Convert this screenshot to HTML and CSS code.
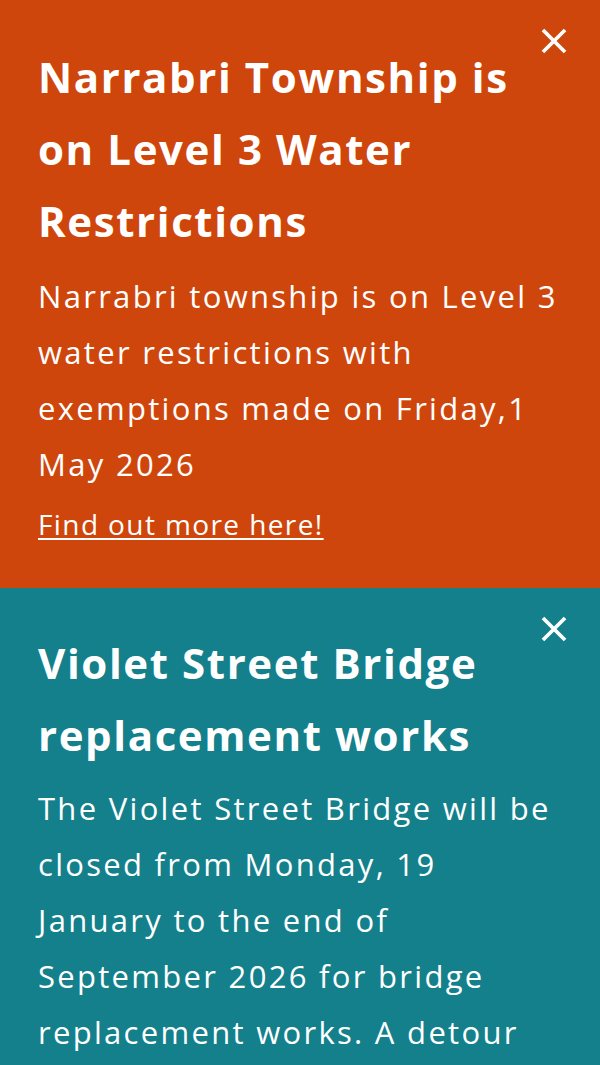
FILE: index.html
```html
<!DOCTYPE html>
<html lang="en">
<head>
    <meta charset="UTF-8">
    <meta name="viewport" content="width=device-width, initial-scale=1.0">
    <title>Alerts</title>
    <link rel="stylesheet" href="styles.css">
</head>
<body>

    <!-- Water restrictions alert -->
    <section class="alert alert-orange">
        <button class="alert-close" aria-label="Close alert">
            <svg viewBox="0 0 24 24" width="26" height="26"><path d="M3 3 L21 21 M21 3 L3 21" /></svg>
        </button>
        <h2>Narrabri Township is on Level 3 Water Restrictions</h2>
        <p>Narrabri township is on Level 3 water restrictions with exemptions made on Friday,1 May 2026</p>
        <p class="alert-more"><a href="#">Find out more here!</a></p>
    </section>

    <!-- Bridge works alert -->
    <section class="alert alert-teal">
        <button class="alert-close" aria-label="Close alert">
            <svg viewBox="0 0 24 24" width="26" height="26"><path d="M3 3 L21 21 M21 3 L3 21" /></svg>
        </button>
        <h2>Violet Street Bridge replacement works</h2>
        <p>The Violet Street Bridge will be closed from Monday, 19 January to the end of September 2026 for bridge replacement works. A detour will be in place via the Newell Highway.</p>
    </section>

</body>
</html>
```

FILE: styles.css
```css
:root {
    --orange: #cf460c;
    --teal: #13808b;
    --white: #ffffff;
    --font-family: 'Open Sans', 'Noto Sans', Arial, sans-serif;
}

body {
    margin: 0;
    font-family: var(--font-family);
    color: var(--white);
}

.alert {
    position: relative;
    padding: 41px 34px 44px 38px;
}
.alert + .alert {
    padding-top: 39px;
}
.alert-orange {
    background-color: var(--orange);
}
.alert-teal {
    background-color: var(--teal);
}

.alert h2 {
    margin: 0 0 11px;
    padding-right: 40px;
    font-size: 42px;
    font-weight: 700;
    letter-spacing: 1.6px;
    line-height: 72px;
}
.alert-teal h2 {
    margin-bottom: 9px;
}
.alert p {
    margin: 0;
    font-size: 31px;
    letter-spacing: 2.3px;
    line-height: 56px;
}
.alert .alert-more {
    margin-top: 12px;
    font-size: 28px;
    letter-spacing: 1.4px;
    line-height: 40px;
}
.alert-more a {
    color: var(--white);
    text-underline-offset: 3px;
}

.alert-close {
    position: absolute;
    top: 28px;
    right: 33px;
    background: none;
    border: none;
    padding: 0;
    cursor: pointer;
}
.alert-close svg {
    display: block;
    fill: none;
    stroke: var(--white);
    stroke-width: 3.4;
    stroke-linecap: square;
}
```
